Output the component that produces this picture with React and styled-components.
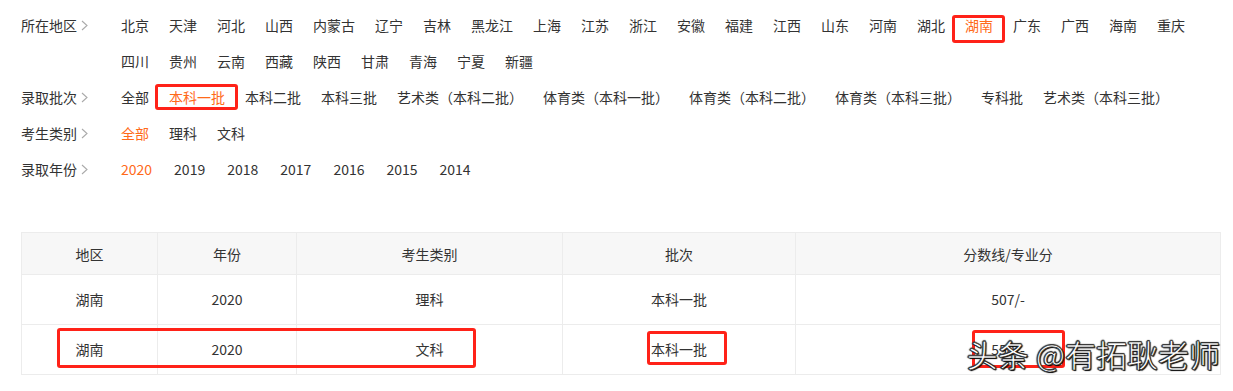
import React from "react";
import styled, { createGlobalStyle } from "styled-components";

const GlobalStyle = createGlobalStyle`
  body {
    margin: 0;
    background: #fff;
    font-family: "Noto Sans CJK SC", "Microsoft YaHei", sans-serif;
    color: #333;
  }
`;

const Page = styled.div`
  padding: 7px 13px 0 21px;
`;

const Filters = styled.div`
  display: flex;
  flex-direction: column;
`;

const FilterRow = styled.div`
  display: flex;
  align-items: flex-start;
`;

const Label = styled.div`
  flex: none;
  width: 100px;
  height: 36px;
  display: flex;
  align-items: center;
  gap: 4px;
  font-size: 14px;
  color: #333;
`;

const Options = styled.div`
  flex: 1;
  display: flex;
  flex-wrap: wrap;
  column-gap: ${(props) => props.gap || "20px"};
  padding-right: 30px;
`;

const Option = styled.span`
  position: relative;
  line-height: 36px;
  font-size: 14px;
  white-space: nowrap;
  color: ${(props) => (props.active ? "#ff6a1a" : "#333")};

  ${(props) =>
    props.mark &&
    `
    &::after {
      content: "";
      position: absolute;
      inset: ${props.mark};
      border: 3px solid #ff2218;
      border-radius: 3px;
    }
  `}
`;

const Chevron = () => (
  <svg width="7" height="11" viewBox="0 0 7 11">
    <polyline points="1,1 6,5.5 1,10" fill="none" stroke="#aaa" strokeWidth="1.1" />
  </svg>
);

const TableWrap = styled.div`
  position: relative;
  margin-top: 45px;
  width: 1199px;
`;

const Table = styled.table`
  width: 100%;
  border-collapse: collapse;
  table-layout: fixed;
  font-size: 14px;
  color: #333;
`;

const Th = styled.th`
  height: 41px;
  background: #f7f7f7;
  border: 1px solid #ececec;
  font-weight: normal;
  text-align: center;
  padding: 0;
`;

const Td = styled.td`
  height: 47px;
  border: 1px solid #ececec;
  text-align: center;
  padding: 0 0 2px;
`;

const Annotation = styled.div`
  position: absolute;
  left: ${(props) => props.x}px;
  top: ${(props) => props.y}px;
  width: ${(props) => props.w}px;
  height: ${(props) => props.h}px;
  box-sizing: border-box;
  border: 3px solid #ff2218;
  border-radius: 3px;
`;

const Watermark = styled.div`
  position: absolute;
  right: 0;
  top: 102px;
  font-size: 31px;
  line-height: 40px;
  color: #fff;
  white-space: nowrap;
  -webkit-text-stroke: 0.7px #222;
  text-shadow: 1px 1px 1px #000, -1px 0 1px #333, 0 -1px 1px #333;
`;

const regions = [
  "北京", "天津", "河北", "山西", "内蒙古", "辽宁", "吉林", "黑龙江", "上海", "江苏",
  "浙江", "安徽", "福建", "江西", "山东", "河南", "湖北", "湖南", "广东", "广西",
  "海南", "重庆", "四川", "贵州", "云南", "西藏", "陕西", "甘肃", "青海", "宁夏", "新疆",
];

const batches = [
  "全部", "本科一批", "本科二批", "本科三批", "艺术类（本科二批）", "体育类（本科一批）",
  "体育类（本科二批）", "体育类（本科三批）", "专科批", "艺术类（本科三批）",
];

const years = ["2020", "2019", "2018", "2017", "2016", "2015", "2014"];

const rows = [
  ["湖南", "2020", "理科", "本科一批", "507/-"],
  ["湖南", "2020", "文科", "本科一批", "550/-"],
];

export default function App() {
  return (
    <Page>
      <GlobalStyle />
      <Filters>
        <FilterRow>
          <Label>所在地区<Chevron /></Label>
          <Options>
            {regions.map((r) => (
              <Option key={r} active={r === "湖南"} mark={r === "湖南" ? "8px -12px 0 -13px" : null}>
                {r}
              </Option>
            ))}
          </Options>
        </FilterRow>
        <FilterRow>
          <Label>录取批次<Chevron /></Label>
          <Options>
            {batches.map((b) => (
              <Option key={b} active={b === "本科一批"} mark={b === "本科一批" ? "5px -13px 5px -14px" : null}>
                {b}
              </Option>
            ))}
          </Options>
        </FilterRow>
        <FilterRow>
          <Label>考生类别<Chevron /></Label>
          <Options>
            {["全部", "理科", "文科"].map((c) => (
              <Option key={c} active={c === "全部"}>{c}</Option>
            ))}
          </Options>
        </FilterRow>
        <FilterRow>
          <Label>录取年份<Chevron /></Label>
          <Options gap="22px">
            {years.map((y) => (
              <Option key={y} active={y === "2020"}>{y}</Option>
            ))}
          </Options>
        </FilterRow>
      </Filters>

      <TableWrap>
        <Table>
          <colgroup>
            <col style={{ width: 136 }} />
            <col style={{ width: 139 }} />
            <col style={{ width: 266 }} />
            <col style={{ width: 233 }} />
            <col style={{ width: 425 }} />
          </colgroup>
          <thead>
            <tr>
              <Th>地区</Th>
              <Th>年份</Th>
              <Th>考生类别</Th>
              <Th>批次</Th>
              <Th>分数线/专业分</Th>
            </tr>
          </thead>
          <tbody>
            {rows.map((row, i) => (
              <tr key={i}>
                {row.map((cell, j) => (
                  <Td key={j}>{cell}</Td>
                ))}
              </tr>
            ))}
          </tbody>
        </Table>
        <Annotation x={36} y={96} w={419} h={40} />
        <Annotation x={626} y={99} w={80} h={34} />
        <Annotation x={951} y={98} w={93} h={38} />
        <Watermark>头条 @有拓耿老师</Watermark>
      </TableWrap>
    </Page>
  );
}
